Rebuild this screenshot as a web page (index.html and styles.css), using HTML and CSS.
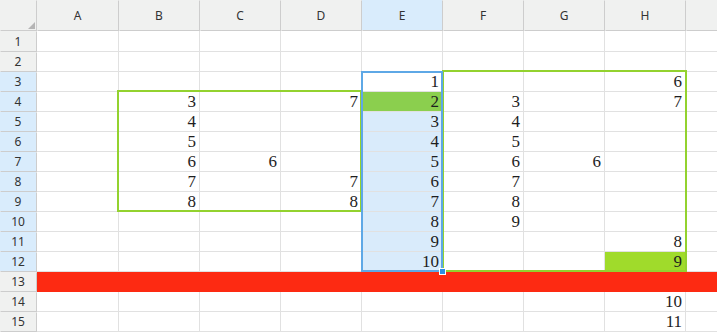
FILE: index.html
```html
<!DOCTYPE html>
<html lang="en">

<head>
    <meta charset="UTF-8">
    <title>Sheet</title>
    <link rel="stylesheet" href="styles.css">
</head>

<body>
    <div class="view">
        <div class="sheet">
            <div class="row">
                <div class="head corner"></div>
                <div class="head">A</div><div class="head">B</div><div class="head">C</div><div class="head">D</div>
                <div class="head on">E</div><div class="head">F</div><div class="head">G</div><div class="head">H</div><div class="head"></div>
            </div>
            <div class="row">
                <div class="head">1</div>
                <div class="cell"></div><div class="cell"></div><div class="cell"></div><div class="cell"></div>
                <div class="cell"></div><div class="cell"></div><div class="cell"></div><div class="cell"></div><div class="cell"></div>
            </div>
            <div class="row">
                <div class="head">2</div>
                <div class="cell"></div><div class="cell"></div><div class="cell"></div><div class="cell"></div>
                <div class="cell"></div><div class="cell"></div><div class="cell"></div><div class="cell"></div><div class="cell"></div>
            </div>
            <div class="row">
                <div class="head on">3</div>
                <div class="cell"></div><div class="cell"></div><div class="cell"></div><div class="cell"></div>
                <div class="cell">1</div><div class="cell"></div><div class="cell"></div><div class="cell">6</div><div class="cell"></div>
            </div>
            <div class="row">
                <div class="head on">4</div>
                <div class="cell"></div><div class="cell">3</div><div class="cell"></div><div class="cell">7</div>
                <div class="cell green">2</div><div class="cell">3</div><div class="cell"></div><div class="cell">7</div><div class="cell"></div>
            </div>
            <div class="row">
                <div class="head on">5</div>
                <div class="cell"></div><div class="cell">4</div><div class="cell"></div><div class="cell"></div>
                <div class="cell sel">3</div><div class="cell">4</div><div class="cell"></div><div class="cell"></div><div class="cell"></div>
            </div>
            <div class="row">
                <div class="head on">6</div>
                <div class="cell"></div><div class="cell">5</div><div class="cell"></div><div class="cell"></div>
                <div class="cell sel">4</div><div class="cell">5</div><div class="cell"></div><div class="cell"></div><div class="cell"></div>
            </div>
            <div class="row">
                <div class="head on">7</div>
                <div class="cell"></div><div class="cell">6</div><div class="cell">6</div><div class="cell"></div>
                <div class="cell sel">5</div><div class="cell">6</div><div class="cell">6</div><div class="cell"></div><div class="cell"></div>
            </div>
            <div class="row">
                <div class="head on">8</div>
                <div class="cell"></div><div class="cell">7</div><div class="cell"></div><div class="cell">7</div>
                <div class="cell sel">6</div><div class="cell">7</div><div class="cell"></div><div class="cell"></div><div class="cell"></div>
            </div>
            <div class="row">
                <div class="head on">9</div>
                <div class="cell"></div><div class="cell">8</div><div class="cell"></div><div class="cell">8</div>
                <div class="cell sel">7</div><div class="cell">8</div><div class="cell"></div><div class="cell"></div><div class="cell"></div>
            </div>
            <div class="row">
                <div class="head on">10</div>
                <div class="cell"></div><div class="cell"></div><div class="cell"></div><div class="cell"></div>
                <div class="cell sel">8</div><div class="cell">9</div><div class="cell"></div><div class="cell"></div><div class="cell"></div>
            </div>
            <div class="row">
                <div class="head on">11</div>
                <div class="cell"></div><div class="cell"></div><div class="cell"></div><div class="cell"></div>
                <div class="cell sel">9</div><div class="cell"></div><div class="cell"></div><div class="cell">8</div><div class="cell"></div>
            </div>
            <div class="row">
                <div class="head on">12</div>
                <div class="cell"></div><div class="cell"></div><div class="cell"></div><div class="cell"></div>
                <div class="cell sel">10</div><div class="cell"></div><div class="cell"></div><div class="cell lime">9</div><div class="cell"></div>
            </div>
            <div class="row">
                <div class="head">13</div>
                <div class="cell band"></div>
            </div>
            <div class="row">
                <div class="head">14</div>
                <div class="cell"></div><div class="cell"></div><div class="cell"></div><div class="cell"></div>
                <div class="cell"></div><div class="cell"></div><div class="cell"></div><div class="cell">10</div><div class="cell"></div>
            </div>
            <div class="row">
                <div class="head">15</div>
                <div class="cell"></div><div class="cell"></div><div class="cell"></div><div class="cell"></div>
                <div class="cell"></div><div class="cell"></div><div class="cell"></div><div class="cell">11</div><div class="cell"></div>
            </div>
        </div>

        <div class="marks">
            <div class="range range-left"></div>
            <div class="range range-right"></div>
            <div class="selection"></div>
            <div class="handle"></div>
        </div>
    </div>
</body>

</html>
```

FILE: styles.css
```css
* {
    margin: 0;
    padding: 0;
    box-sizing: border-box;
}

html,
body {
    width: 717px;
    height: 332px;
    overflow: hidden;
    background-color: #fff;
    font-family: "Noto Sans", sans-serif;
}

.view {
    display: grid;
    width: 717px;
    height: 332px;
}

.sheet,
.marks {
    grid-area: 1 / 1;
    display: grid;
    grid-template-columns: 36px 81px repeat(7, 80px) 1fr;
    grid-template-rows: 30px 20px repeat(14, 19px);
    gap: 1px;
}

.sheet {
    background-color: #e1e1e1;
}

.marks {
    pointer-events: none;
}

.row {
    display: contents;
}

.cell {
    display: flex;
    align-items: center;
    justify-content: flex-end;
    padding-right: 3px;
    background-color: #fff;
    color: #1e1e1e;
    font: 17px/19px "Liberation Serif", serif;
}

.head {
    display: flex;
    align-items: center;
    justify-content: center;
    background-color: #f0f1f0;
    color: #333;
    font: 12px "Noto Sans", sans-serif;
    box-shadow: 1px 1px 0 #cdcdcd;
}

.head.on {
    background-color: #d9ecfc;
}

.corner {
    position: relative;
}

.corner::after {
    content: "";
    position: absolute;
    right: 1px;
    bottom: 1px;
    border-left: 7px solid transparent;
    border-bottom: 7px solid #b5b5b5;
}

.sel {
    background-color: #d9ebfb;
}

.green {
    background-color: #8bcf4e;
}

.lime {
    background-color: #a0db2b;
}

.band {
    grid-column: 2 / -1;
    margin-bottom: -1px;
    background-color: #fd2a12;
}

.range {
    border: 2px solid #93d22f;
}

.range-left {
    grid-row: 5 / 11;
    grid-column: 3 / 6;
    margin: -2px -1px -1px -2px;
}

.range-right {
    grid-row: 4 / 14;
    grid-column: 7 / 10;
    margin: -2px -2px -1px -1px;
}

.selection {
    grid-row: 4 / 14;
    grid-column: 6 / 7;
    margin: -1px;
    border: 2px solid #5ea8e6;
}

.handle {
    grid-row: 13;
    grid-column: 6;
    justify-self: end;
    align-self: end;
    width: 7px;
    height: 7px;
    margin: 0 -4px -4px 0;
    border: 1px solid #fff;
    background-color: #2d8fe2;
}
```
